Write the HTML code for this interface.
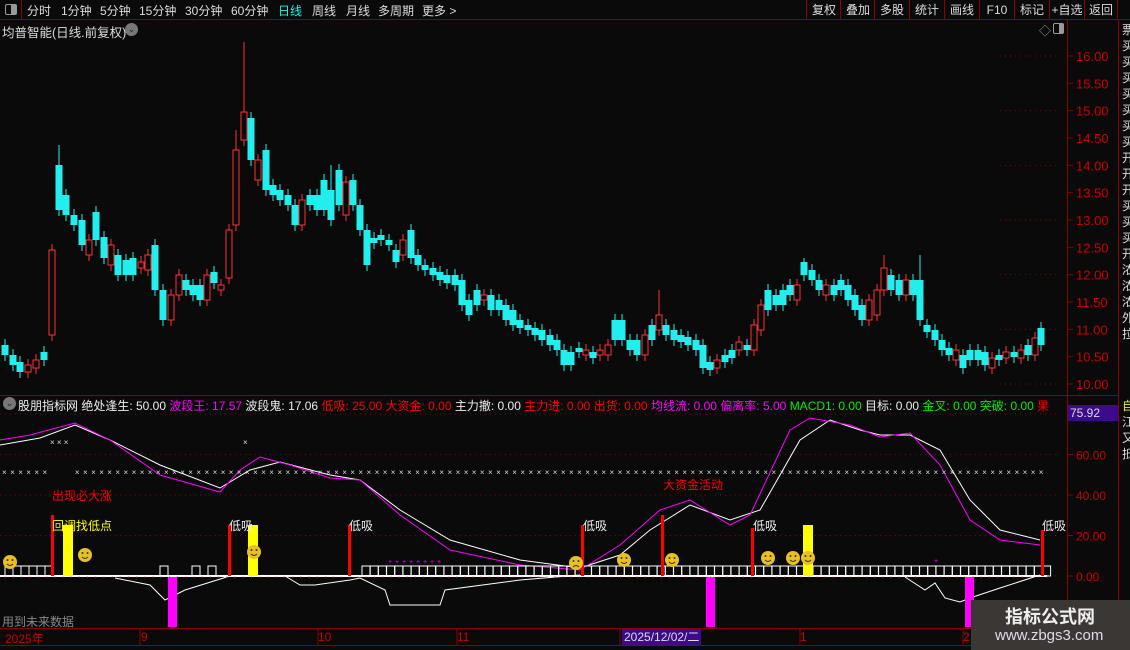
<!DOCTYPE html>
<html><head><meta charset="utf-8"><style>
*{margin:0;padding:0;box-sizing:border-box}
body{width:1130px;height:650px;background:#0a0a0a;overflow:hidden;position:relative;font-family:"Liberation Sans","Noto Sans CJK SC",sans-serif;color:#ddd;font-size:12px}
.a{position:absolute;white-space:nowrap}
.tb{position:absolute;top:2px;font-size:12px;color:#ddd}
.btn{position:absolute;top:0;height:20px;border-left:1px solid #8b0000;color:#ddd;font-size:12px;line-height:20px;text-align:center;width:35px}
</style></head><body>
<div class="a" style="left:0;top:0;width:1130px;height:20px;border-bottom:1px solid #8b0000"></div>
<div class="a" style="left:0;top:0;width:22px;height:20px;border-right:1px solid #8b0000"></div>
<div class="a" style="left:5px;top:4px;width:12px;height:11px;border:1px solid #999;border-radius:2px;background:linear-gradient(90deg,#0a0a0a 50%,#999 50%)"></div>
<div class="tb" style="left:27px">分时</div><div class="tb" style="left:61px">1分钟</div><div class="tb" style="left:100px">5分钟</div><div class="tb" style="left:139px">15分钟</div><div class="tb" style="left:185px">30分钟</div><div class="tb" style="left:231px">60分钟</div><div class="tb" style="left:278px;color:#2ee">日线</div><div class="tb" style="left:312px">周线</div><div class="tb" style="left:346px">月线</div><div class="tb" style="left:378px">多周期</div><div class="tb" style="left:422px">更多 &gt;</div>
<div class="btn" style="left:806px">复权</div><div class="btn" style="left:840px">叠加</div><div class="btn" style="left:874px">多股</div><div class="btn" style="left:909px">统计</div><div class="btn" style="left:944px">画线</div><div class="btn" style="left:979px">F10</div><div class="btn" style="left:1014px">标记</div><div class="btn" style="left:1049px">+自选</div><div class="btn" style="left:1084px;width:34px;border-right:1px solid #8b0000">返回</div>
<div class="a" style="left:2px;top:22px;font-size:12.5px;color:#ddd">均普智能(日线.前复权)</div>
<div class="a" style="left:125px;top:23px;width:13px;height:13px;border-radius:50%;background:#777;color:#222;font-size:9px;line-height:13px;text-align:center">⌄</div>
<div class="a" style="left:1039px;top:22px;color:#999;font-size:12px">◇</div>
<div class="a" style="left:1053px;top:23px;width:11px;height:11px;border:1px solid #999;border-radius:2px;background:linear-gradient(90deg,#0a0a0a 55%,#999 55%)"></div>
<div class="a" style="left:1067px;top:20px;width:1px;height:630px;background:#8b0000"></div>
<div class="a" style="left:1118px;top:20px;width:1px;height:630px;background:#8b0000"></div>
<div class="a" style="left:0;top:395px;width:1118px;height:1px;background:#8b0000"></div>
<div class="a" style="left:0;top:628px;width:1118px;height:1px;background:#8b0000"></div>
<div class="a" style="left:0;top:645px;width:1118px;height:1px;background:#8b0000"></div>
<div class="a" style="left:1122px;top:22px;width:8px;color:#ddd;font-size:12px;line-height:16px;white-space:normal">票买买买买买买买开开开买买买开浓浓浓外拉</div>
<div class="a" style="left:1122px;top:398px;width:8px;color:#ee0;font-size:12px;line-height:16px;white-space:normal">自<span style="color:#ddd">江又抵</span></div>
<svg class="a" style="left:0;top:0" width="1130" height="650" id="sv"></svg>
<div class="a" style="left:3px;top:397px;width:13px;height:13px;border-radius:50%;background:#777;color:#222;font-size:9px;line-height:13px;text-align:center">⌄</div>
<div class="a" style="left:18px;top:397px;font-size:12px;color:#eee">股朋指标网 绝处逢生: 50.00 <span style="color:#f0f">波段王: 17.57</span> 波段鬼: 17.06 <span style="color:#f00">低吸: 25.00 大资金: 0.00</span> 主力撤: 0.00 <span style="color:#f00">主力进: 0.00 出货: 0.00</span> <span style="color:#f0f">均线流: 0.00 偏离率: 5.00</span> <span style="color:#0e0">MACD1: 0.00</span> 目标: 0.00 <span style="color:#0e0">金叉: 0.00 突破: 0.00</span> <span style="color:#f00">果</span></div>
<div class="a" style="left:1068px;top:405px;width:50px;height:16px;background:#3c0a8c;color:#ddd;font-size:12px;line-height:16px;padding-left:2px">75.92</div>
<div class="a" style="left:52px;top:487px;color:#f00;font-size:12px">出现必大涨</div>
<div class="a" style="left:52px;top:517px;color:#ff0;font-size:12px">回调找低点</div>
<div class="a" style="left:663px;top:476px;color:#f00;font-size:12px">大资金活动</div>
<div class="a" style="left:229px;top:517px;color:#eee;font-size:12px">低吸</div>
<div class="a" style="left:349px;top:517px;color:#eee;font-size:12px">低吸</div>
<div class="a" style="left:583px;top:517px;color:#eee;font-size:12px">低吸</div>
<div class="a" style="left:753px;top:517px;color:#eee;font-size:12px">低吸</div>
<div class="a" style="left:1042px;top:517px;color:#eee;font-size:12px">低吸</div>
<div class="a" style="left:2px;top:613px;color:#888;font-size:12px">用到未来数据</div>
<div class="a" style="left:5px;top:630px;color:#c00;font-size:12px">2025年</div>
<div class="a" style="left:141px;top:630px;color:#c00;font-size:12px">9</div>
<div class="a" style="left:318px;top:630px;color:#c00;font-size:12px">10</div>
<div class="a" style="left:457px;top:630px;color:#c00;font-size:12px">11</div>
<div class="a" style="left:622px;top:629px;background:#3c0a8c;color:#ddd;font-size:12px;padding:0 2px;line-height:16px">2025/12/02/二</div>
<div class="a" style="left:800px;top:630px;color:#c00;font-size:12px">1</div>
<div class="a" style="left:963px;top:630px;color:#c00;font-size:12px">2</div>
<div class="a" style="left:971px;top:600px;width:159px;height:50px;background:#3b3735"></div>
<div class="a" style="left:1005px;top:603px;color:#eee;font-size:18px;font-weight:bold">指标公式网</div>
<div class="a" style="left:995px;top:627px;color:#dde;font-size:15px">www.zbgs3.com</div>
<script>
var s='',svg=document.getElementById('sv');
function L(x1,y1,x2,y2,c,w,d){s+='<line x1="'+x1+'" y1="'+y1+'" x2="'+x2+'" y2="'+y2+'" stroke="'+c+'" stroke-width="'+(w||1)+'"'+(d?' stroke-dasharray="'+d+'"':'')+'/>';}
function T(x,y,t,c,fs){s+='<text x="'+x+'" y="'+y+'" fill="'+c+'" font-size="'+(fs||12)+'" font-family="Liberation Sans,sans-serif">'+t+'</text>';}
for(var p=10;p<=16.01;p+=0.5){var y=384-(p-10)*54.67;L(1067,y,1073,y,'#8b0000');T(1076,y+5,p.toFixed(2),'#c00',13);if(Math.abs(p-Math.round(p))<.01)L(1000,y,1060,y,'#8b0000',1,'1 4');}
for(var i=0;i<=4;i++){var y=576-i*40.5;L(1067,y,1073,y,'#8b0000');if(i<4)T(1076,y+5,(i*20).toFixed(2),'#c00',12);L(0,y,1060,y,'#8b0000',1,'1 4');}
var c=[[5,345,355,'c'],[13,355,365,'c'],[20,362,372,'c'],[28,365,372,'r'],[36,360,368,'r'],[44,352,360,'c'],[52,250,335,'r'],[59,165,210,'c'],[66,195,215,'c'],[74,215,225,'c'],[82,220,245,'c'],[89,240,255,'r'],[96,212,240,'c'],[104,237,258,'c'],[111,245,265,'r'],[118,255,275,'c'],[126,260,275,'c'],[133,258,275,'c'],[141,262,268,'r'],[148,255,270,'r'],[155,245,290,'c'],[163,290,320,'c'],[171,295,320,'r'],[179,275,295,'r'],[186,280,290,'c'],[193,285,295,'c'],[200,285,300,'c'],[207,275,300,'r'],[214,272,283,'c'],[221,285,290,'r'],[229,230,278,'r'],[236,150,225,'r'],[244,112,140,'r'],[251,118,160,'c'],[258,160,180,'r'],[266,150,190,'c'],[273,185,195,'c'],[280,190,200,'c'],[288,195,205,'c'],[295,205,225,'c'],[302,200,225,'r'],[310,195,205,'c'],[317,195,210,'c'],[324,180,210,'c'],[331,190,220,'c'],[339,170,205,'c'],[346,182,215,'r'],[353,180,205,'c'],[360,205,230,'c'],[367,230,265,'c'],[374,238,243,'c'],[381,235,240,'c'],[389,240,245,'c'],[396,250,262,'c'],[403,240,255,'r'],[411,230,258,'c'],[418,255,265,'c'],[425,265,270,'c'],[433,268,275,'c'],[440,272,280,'c'],[447,275,283,'c'],[455,275,285,'c'],[462,280,305,'c'],[469,300,315,'c'],[477,290,305,'c'],[484,295,300,'r'],[491,295,310,'c'],[499,300,310,'c'],[506,305,320,'c'],[513,310,325,'c'],[520,320,328,'c'],[528,325,330,'c'],[535,328,335,'c'],[542,330,340,'c'],[550,335,345,'c'],[557,340,350,'c'],[564,350,365,'c'],[571,352,365,'c'],[579,348,352,'c'],[586,350,355,'r'],[593,352,358,'c'],[600,350,355,'r'],[608,345,355,'r'],[615,320,340,'c'],[622,320,340,'c'],[630,340,350,'c'],[637,340,355,'c'],[645,335,355,'r'],[652,325,340,'c'],[659,315,330,'r'],[666,325,335,'c'],[674,330,340,'c'],[681,335,342,'c'],[688,337,345,'c'],[696,340,350,'c'],[703,345,368,'c'],[710,362,370,'c'],[717,360,368,'r'],[725,355,362,'c'],[732,350,358,'c'],[739,342,350,'r'],[747,345,350,'c'],[754,325,350,'r'],[761,305,330,'r'],[768,290,310,'c'],[776,295,305,'c'],[783,290,305,'c'],[790,285,295,'c'],[797,285,300,'r'],[804,262,275,'c'],[812,270,280,'c'],[819,280,290,'c'],[826,285,295,'r'],[834,285,295,'c'],[841,280,290,'c'],[848,285,300,'c'],[855,295,310,'c'],[862,305,320,'c'],[869,300,320,'r'],[877,290,315,'r'],[884,268,290,'r'],[891,275,290,'c'],[899,280,295,'c'],[906,280,295,'r'],[913,280,295,'c'],[920,280,320,'c'],[927,325,332,'c'],[935,330,340,'c'],[942,340,350,'c'],[949,348,355,'c'],[956,350,360,'r'],[963,355,368,'c'],[970,350,360,'c'],[978,350,360,'c'],[985,352,365,'c'],[992,358,368,'r'],[999,355,360,'c'],[1006,352,358,'r'],[1014,352,357,'c'],[1021,350,358,'r'],[1028,345,355,'c'],[1035,338,355,'r'],[1041,328,345,'c']];
var wk={59:145,244:42,236:130,331:165,659:290,884:255,920:255,804:258};
c.forEach(function(k){var col=k[3]=='r'?'#f33':'#2ee';var wt=wk[k[0]]||k[1]-6,wb=k[2]+6;L(k[0],wt,k[0],wb,col);
if(k[3]=='r')s+='<rect x="'+(k[0]-3)+'" y="'+k[1]+'" width="6" height="'+Math.max(1,k[2]-k[1])+'" fill="#0a0a0a" stroke="#f33"/>';
else s+='<rect x="'+(k[0]-3.5)+'" y="'+k[1]+'" width="7" height="'+Math.max(1,k[2]-k[1])+'" fill="#2ee"/>';});
function P(pts,col,w){s+='<polyline fill="none" stroke="'+col+'" stroke-width="'+(w||1)+'" points="'+pts+'"/>';}
P('0,445 40,438 75,425 110,440 160,465 220,488 250,470 280,462 330,475 360,480 400,510 450,540 520,560 580,568 620,555 650,530 690,505 730,520 760,510 800,440 830,420 860,430 880,435 910,435 940,450 970,500 1000,530 1040,540','#fff');
P('0,440 30,435 75,423 110,440 160,475 220,492 240,470 260,457 290,465 330,478 360,480 400,515 450,550 520,565 580,570 620,545 660,510 690,500 730,525 750,515 790,430 810,418 850,425 880,437 910,433 940,465 970,520 1000,540 1040,545','#f0f');
P('115,578 150,585 165,600 185,590 230,576','#fff');
P('285,576 300,585 315,585 350,580 360,578 385,590 390,605 440,605 445,590 520,580 580,575','#fff');
P('905,577 925,590 935,583 945,598 960,602 970,598 1000,588 1040,575','#fff');
for(var x=2;x<1045;x+=8.1){if(x>48&&x<72)continue;T(x,475,'×','#ddd',8);}
T(50,445,'× × ×','#ddd',8);T(243,445,'×','#ddd',8);
L(0,576,1047,576,'#fff',2);
for(var x=5;x<1047;x+=8.2)L(x,577,x+1,577,'#f33',1);
function box(x){s+='<rect x="'+x+'" y="566" width="8" height="10" fill="none" stroke="#fff"/>';}
for(var x=5;x<50;x+=8)box(x);[160,192,208].forEach(box);
for(var x=362;x<1047;x+=8.2)box(x);
[[52,515],[229,525],[349,525],[582,525],[662,515],[752,528],[1042,530]].forEach(function(r){s+='<rect x="'+(r[0]-1)+'" y="'+r[1]+'" width="3" height="'+(576-r[1])+'" fill="#f00"/>';});
[[63,525],[248,525],[803,525]].forEach(function(r){s+='<rect x="'+r[0]+'" y="'+r[1]+'" width="10" height="'+(576-r[1])+'" fill="#ff0"/>';});
[168,706,965].forEach(function(x){s+='<rect x="'+x+'" y="577" width="9" height="50" fill="#f0f"/>';});
function sm(x,y,fr){s+='<circle cx="'+x+'" cy="'+y+'" r="7" fill="#e8c020"/><circle cx="'+(x-2.5)+'" cy="'+(y-2)+'" r="1" fill="#333"/><circle cx="'+(x+2.5)+'" cy="'+(y-2)+'" r="1" fill="#333"/><path d="M'+(x-3)+' '+(y+(fr?4:2))+' Q'+x+' '+(y+(fr?1:5))+' '+(x+3)+' '+(y+(fr?4:2))+'" stroke="#333" fill="none"/>';}
sm(10,562);sm(85,555);sm(254,552);sm(576,563,1);sm(624,560);sm(672,560);sm(768,558);sm(793,558);sm(808,558);
for(var x=388;x<440;x+=7)T(x,564,'+','#f0f',7);T(934,563,'+','#f0f',7);
[140,318,457,620,800,963].forEach(function(x){L(x,628,x,645,'#8b0000');});
svg.innerHTML=s;
</script>
</body></html>
